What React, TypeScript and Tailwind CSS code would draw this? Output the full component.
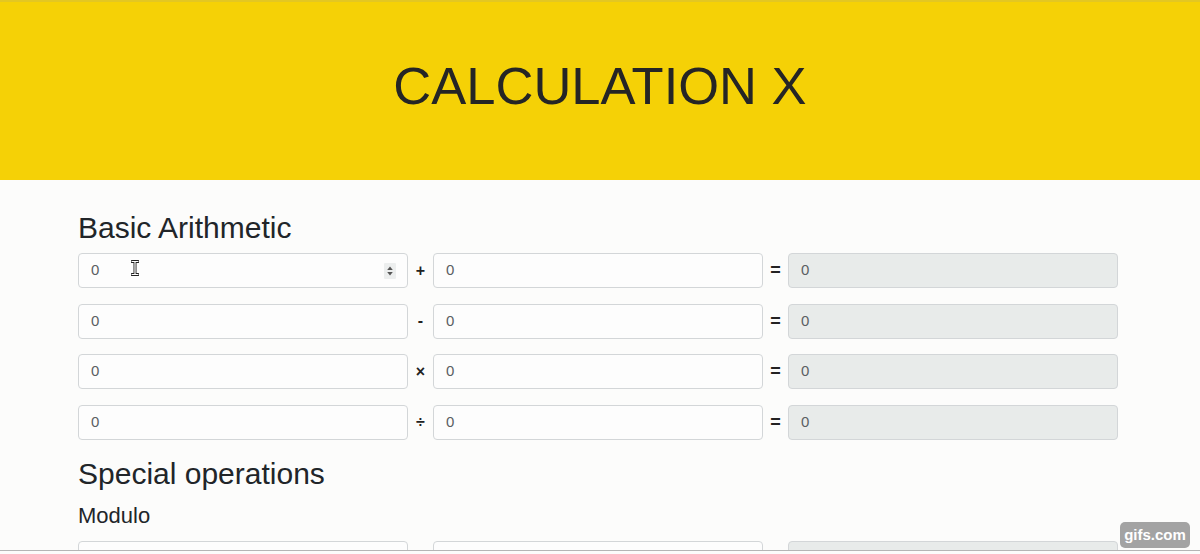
import React from 'react';

const font = { fontFamily: '"Liberation Sans", Arial, sans-serif' };

function Field({ readOnly, spinner, blank }: { readOnly?: boolean; spinner?: boolean; blank?: boolean }) {
  return (
    <div
      className={`relative h-[35px] rounded-[4px] border border-[#d3d6d8] flex items-center pl-[12px] text-[15px] text-[#5a5f63] ${
        readOnly ? 'bg-[#e8ebea]' : 'bg-[#fdfdfd]'
      }`}
    >
      {blank ? '' : '0'}
      {spinner && (
        <>
          <svg className="absolute left-[52px] top-[6px]" width="8" height="16" viewBox="0 0 8 16">
            <path d="M1 1.5h6M1 14.5h6M4 1.5v13" stroke="#222" strokeWidth="3" strokeLinecap="round" />
            <path d="M1 1.5h6M1 14.5h6M4 1.5v13" stroke="#fff" strokeWidth="1.2" strokeLinecap="round" />
          </svg>
          <svg className="absolute right-[11px] top-[9px]" width="12" height="16" viewBox="0 0 12 16">
            <rect width="12" height="16" rx="1" fill="#eceeee" />
            <path d="M3.2 7l2.8-3.4 2.8 3.4z M3.2 9l2.8 3.4 2.8-3.4z" fill="#555" />
          </svg>
        </>
      )}
    </div>
  );
}

function Row({ op, first, blank }: { op: string; first?: boolean; blank?: boolean }) {
  return (
    <div className="grid grid-cols-[330px_25px_330px_25px_330px] items-center">
      <Field spinner={first} blank={blank} />
      <span className="text-center font-bold text-[16px] text-[#222]">{op}</span>
      <Field blank={blank} />
      <span className="text-center font-bold text-[18px] text-[#222]">{blank ? '' : '='}</span>
      <Field readOnly blank={blank} />
    </div>
  );
}

export default function App() {
  return (
    <div className="relative w-[1200px] h-[554px] overflow-hidden bg-[#fcfcfb] text-[#212529]" style={font}>
      <header className="h-[180px] bg-[#f5d106] border-t-2 border-[#e3c722] flex items-center justify-center">
        <h1 className="text-[52.5px] leading-none text-[#252525] -mt-[10px]">CALCULATION X</h1>
      </header>

      <main className="pl-[78px] pt-[30px]">
        <h2 className="text-[30px] leading-[36px] mb-[7px]">Basic Arithmetic</h2>
        <div className="flex flex-col gap-[15.5px]">
          <Row op="+" first />
          <Row op="-" />
          <Row op="×" />
          <Row op="÷" />
        </div>

        <h2 className="text-[30px] leading-[36px] mt-[16px]">Special operations</h2>
        <h3 className="text-[22px] leading-[26px] mt-[11px] mb-[12px]">Modulo</h3>
        <Row op="" blank />
      </main>

      <div className="absolute left-0 right-0 top-[550px] bottom-0 bg-[#fcfcfb] border-t border-[#b5b5b5]" />
      <div className="absolute left-[1120px] top-[522px] h-[26px] w-[70px] rounded-[5px] bg-[#a3a3a3] text-white font-bold text-[15px] leading-[26px] text-center">
        gifs.com
      </div>
    </div>
  );
}
